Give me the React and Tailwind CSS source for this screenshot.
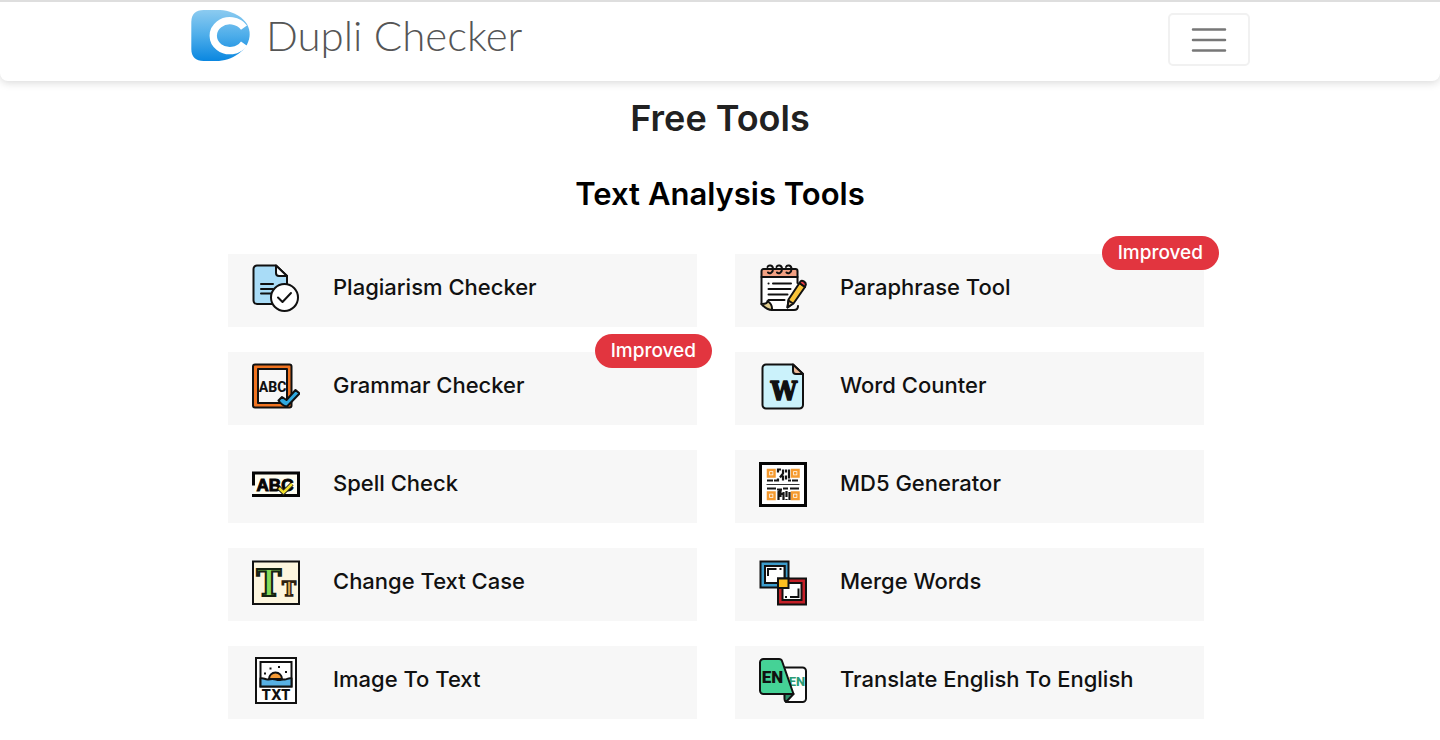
const PlagiarismIcon = () => (
  <svg viewBox="0 0 48 48" className="size-12 shrink-0" fill="none" stroke="#111" strokeWidth="2" strokeLinecap="round" strokeLinejoin="round" aria-hidden="true">
    <path d="M5 1.5h19l11 10.5v28H5a3.500 3.500 0 0 1-3.500-3.500V5A3.500 3.500 0 0 1 5 1.500z" fill="#a9dcf7" />
    <path d="M24 1.500V9a3 3 0 0 0 3 3h8z" fill="#fff" />
    <path d="M9 20h12M9 25h12M9 29.500h10" />
    <circle cx="32.500" cy="33.500" r="13.500" fill="#fff" />
    <path d="M26 33.500l4.500 4.500 8.500-9" />
  </svg>
);

const ParaphraseIcon = () => (
  <svg viewBox="0 0 48 48" className="size-12 shrink-0" fill="none" stroke="#111" strokeWidth="2" strokeLinecap="round" strokeLinejoin="round" aria-hidden="true">
    <path d="M2.500 5H38.500V38L30 46H13L2.500 40z" fill="#fff" stroke="none" />
    <path d="M2.500 13V7a2 2 0 0 1 2-2h32a2 2 0 0 1 2 2v6z" fill="#f3a183" />
    <path d="M2.500 13v27M38.500 13v6" />
    <path d="M2.500 40c4 0 6-1 6-3 3 2 5 5 4.500 9-4 0-8-3-10.500-6z" fill="#e3cf91" />
    <path d="M13 46h22c2.500 0 4-1.500 4-4" />
    <path d="M8.500 3c1-2.500 5.500-2 5.500 2s-3.500 5-5 3.500M17.500 3c1-2.500 5.500-2 5.500 2s-3.500 5-5 3.500M27 3c1-2.500 5.500-2 5.500 2s-3.500 5-5 3.500" />
    <path d="M9.500 19.500h.1M14 19.500h18M9.500 25h22M9.500 30.500h19M9.500 36h16" />
    <path d="M28.500 43.500l1-8 11-16.500 5.500 4-11.500 16.500z" fill="#f9c338" />
    <path d="M40.500 19l1-1.500c1.500-2 6.500 1 5 4L46 23z" fill="#ef3c45" />
    <path d="M28.500 43.500l1-7 4.500 3z" fill="#e8c58f" />
  </svg>
);

const GrammarIcon = () => (
  <svg viewBox="0 0 48 48" className="size-12 shrink-0" stroke="#111" strokeWidth="2" strokeLinejoin="round" aria-hidden="true">
    <rect x="1" y="2.500" width="38.500" height="43" rx="2" fill="#f07320" />
    <rect x="6" y="7" width="29" height="34" fill="#f7f7f7" />
    <text x="20.500" y="29.500" textAnchor="middle" fill="#111" stroke="none" fontSize="14" fontWeight="800" fontFamily="Roboto, sans-serif">ABC</text>
    <path d="M26.500 38.500l3.500-3.500 4.500 3L43.500 28l4 3.500L35 44.500c-3-.5-6-2-8.500-6z" fill="#2fa9e0" />
  </svg>
);

const WordIcon = () => (
  <svg viewBox="0 0 48 48" className="size-12 shrink-0" stroke="#111" strokeWidth="2" strokeLinejoin="round" aria-hidden="true">
    <path d="M7 2.500h27L44 12v31a3.500 3.500 0 0 1-3.500 3.500H7A3.500 3.500 0 0 1 3.500 43V6A3.500 3.500 0 0 1 7 2.500z" fill="#cbf2fb" />
    <path d="M34 2.500V9a3 3 0 0 0 3 3h7z" fill="#eab795" />
    <text x="25" y="38" textAnchor="middle" fill="#111" stroke="#111" strokeWidth="1.500" fontSize="26" fontWeight="700" fontFamily="'DejaVu Serif Condensed', 'DejaVu Serif', serif">W</text>
  </svg>
);

const SpellIcon = () => (
  <svg viewBox="0 0 48 48" className="size-12 shrink-0" aria-hidden="true">
    <rect x="2" y="13" width="44" height="23" fill="#fffdf0" />
    <path d="M1.500 25.500V13h45v22.500H0" fill="none" stroke="#050505" strokeWidth="3" />
    <text x="23" y="31" textAnchor="middle" fill="#050505" stroke="#050505" strokeWidth="1" fontSize="17" fontWeight="900" fontFamily="'Liberation Sans', Arial, sans-serif">ABC</text>
    <path d="M27 28l4.500 4.500 8.500-8.500" fill="none" stroke="#222" strokeWidth="4.500" />
    <path d="M27 28l4.500 4.500 8.500-8.500" fill="none" stroke="#f1df2d" strokeWidth="2.500" />
  </svg>
);

const Md5Icon = () => (
  <svg viewBox="0 0 48 48" className="size-12 shrink-0" aria-hidden="true">
    <rect x="1.500" y="3.500" width="45" height="42" fill="#fff" stroke="#050505" strokeWidth="3" />
    <g fill="#fff" stroke="#f59a2f" strokeWidth="2.500">
      <rect x="9" y="10" width="6.500" height="6.500" />
      <rect x="33" y="10" width="6.500" height="6.500" />
      <rect x="9" y="32.500" width="6.500" height="6.500" />
      <rect x="33" y="32.500" width="6.500" height="6.500" />
    </g>
    <g fill="#f59a2f">
      <rect x="11" y="12" width="2.500" height="2.500" />
      <rect x="35" y="12" width="2.500" height="2.500" />
      <rect x="11" y="34.500" width="2.500" height="2.500" />
      <rect x="35" y="34.500" width="2.500" height="2.500" />
    </g>
    <path d="M8 20.500h6m1 0h3m1-2v3m3-12h-3v3m5-3v4l-3 4m6-8v3m3-3v9m-3-3v4m-3-4v5m5 0h3m1 0h6M8 28.500h9m1 1h5m1 -1h5m2 0h9M19.500 40v-8l2-1v6m3-5v8m3-9v6m0 2v1m3-8v8M19 34h5" fill="none" stroke="#151515" strokeWidth="2.200" />
    <path d="M7.500 24.500h33" stroke="#333" strokeWidth="1" />
  </svg>
);

const TextCaseIcon = () => (
  <svg viewBox="0 0 48 48" className="size-12 shrink-0" fontFamily="'DejaVu Serif Condensed', 'DejaVu Serif', serif" aria-hidden="true">
    <rect x="1" y="3.500" width="46" height="42.500" fill="#fdf6df" stroke="#111" strokeWidth="2" />
    <text x="17" y="38" textAnchor="middle" fontSize="37" fontWeight="700" fill="#83dc58" stroke="#15220f" strokeWidth="2">T</text>
    <text x="37" y="38" textAnchor="middle" fontSize="21" fontWeight="700" fill="#e2a850" stroke="#2c2010" strokeWidth="1.400">T</text>
  </svg>
);

const MergeIcon = () => (
  <svg viewBox="0 0 48 48" className="size-12 shrink-0" stroke="#111" strokeWidth="2" aria-hidden="true">
    <path d="M1.500 3.500h28v26h-28zM6 8v17h19.500V8z" fill="#3d9dcc" fillRule="evenodd" />
    <path d="M6 8h19.500v17H6z" fill="#fff" />
    <path d="M19 20.500h28v26H19z" fill="#c41f27" />
    <path d="M23.500 25h19v17h-19z" fill="#fff" />
    <path d="M19 20.500h10.500V30H19z" fill="#fbbd1f" />
    <path d="M9 18v-7h8.500M20.500 11h2M39.500 30.500v8.500h-8.500M28 39h-2" fill="none" />
  </svg>
);

const ImageTextIcon = () => (
  <svg viewBox="0 0 48 48" className="size-12 shrink-0" stroke="#111" strokeWidth="2" aria-hidden="true">
    <rect x="4" y="2" width="40" height="45" fill="#fff" />
    <rect x="8.500" y="6" width="31" height="24.500" fill="#fff" />
    <path d="M17 23a6.500 6.500 0 0 1 13 0z" fill="#f59a35" />
    <path d="M8.500 22.500c3-1 4 1 7 1s4-1.500 8.500 0 5-.5 8 0 4-2 7.500-1v8h-31z" fill="#58b0e3" />
    <path d="M12 17.500h2M17.500 12.500h2M26 11h2M33 16h2" />
    <text x="24" y="44" textAnchor="middle" fill="#111" stroke="none" fontSize="14" fontWeight="800" fontFamily="Inter, sans-serif">TXT</text>
  </svg>
);

const TranslateIcon = () => (
  <svg viewBox="0 0 48 48" className="size-12 shrink-0" stroke="#111" strokeWidth="2" strokeLinejoin="round" fontFamily="Roboto, sans-serif" aria-hidden="true">
    <path d="M25 11.500h18.500A3.500 3.500 0 0 1 47 15v27.500a3.500 3.500 0 0 1-3.500 3.500H29c-2 0-3-1-3-3z" fill="#fff" />
    <text x="38" y="29.500" textAnchor="middle" fill="#2c9c77" stroke="none" fontSize="13" fontWeight="800">EN</text>
    <path d="M25.500 38h9l-7.500 8c-1-.5-1.500-1.500-1.500-3z" fill="#2b8f69" />
    <path d="M4.500 3H20c1.500 0 2.500.500 3 2l11.500 33H4.500A3.500 3.500 0 0 1 1 34.500v-28A3.500 3.500 0 0 1 4.500 3z" fill="#45d296" />
    <text x="13.500" y="27" textAnchor="middle" fill="#111" stroke="none" fontSize="17" fontWeight="900">EN</text>
  </svg>
);

const LogoMark = () => (
  <svg viewBox="32 30 178 153" className="h-[51px] w-[60px]" aria-hidden="true">
    <defs>
      <linearGradient id="logo" x1="0" y1="0" x2="0" y2="1">
        <stop offset="0" stopColor="#8ccbf0" />
        <stop offset="0.5" stopColor="#4dadea" />
        <stop offset="1" stopColor="#0a87e0" />
      </linearGradient>
    </defs>
    <path d="M72 30h50c48 4 88 32 88 72 0 44-44 76-92 81H72c-24 0-37-12-37-36V66c0-24 13-36 37-36z" fill="url(#logo)" />
    <path d="M193 83A50 45 0 1 0 193 131" fill="none" stroke="#fff" strokeWidth="22" />
  </svg>
);

const tools = [
  { name: "Plagiarism Checker", icon: PlagiarismIcon },
  { name: "Paraphrase Tool", icon: ParaphraseIcon, improved: true },
  { name: "Grammar Checker", icon: GrammarIcon, improved: true },
  { name: "Word Counter", icon: WordIcon },
  { name: "Spell Check", icon: SpellIcon },
  { name: "MD5 Generator", icon: Md5Icon },
  { name: "Change Text Case", icon: TextCaseIcon },
  { name: "Merge Words", icon: MergeIcon },
  { name: "Image To Text", icon: ImageTextIcon },
  { name: "Translate English To English", icon: TranslateIcon },
];

const Navbar = () => {
  return (
    <header className="rounded-b-lg border-t-2 border-[#dedede] bg-white pt-2 pb-3 shadow-[0_2px_8px_rgba(0,0,0,0.15)]">
      <div className="mx-auto flex max-w-[1060px] items-center justify-between">
        <a href="#" className="flex items-center gap-4 pb-2">
          <LogoMark />
          <span className="font-[Lato,sans-serif] text-[42px] leading-[51px] font-light text-[#555]">Dupli Checker</span>
        </a>
        <button type="button" aria-label="Toggle navigation" className="flex h-[53px] w-[82px] items-center justify-center rounded-[5px] border-2 border-[#f1f1f1]">
          <svg viewBox="0 0 36 26" className="h-[26px] w-9" stroke="#777" strokeWidth="2.500" strokeLinecap="round" aria-hidden="true">
            <path d="M2 2.500h32M2 13h32M2 23.500h32" />
          </svg>
        </button>
      </div>
    </header>
  );
};

const ToolCard = ({ name, icon: Icon, improved }) => {
  return (
    <li className="relative">
      <a href="#" className="flex items-center gap-[33px] bg-[#f7f7f7] px-6 pt-2.5 pb-[15px]">
        <Icon />
        <span className="pb-0.5 text-[22px] leading-8 font-medium text-[#111]">{name}</span>
      </a>
      {improved && (
        <span className="absolute -top-[18px] -right-[15px] rounded-full bg-[#e2353f] px-4 text-[19px] leading-[34px] font-medium text-white">
          Improved
        </span>
      )}
    </li>
  );
};

const App = () => {
  return (
    <div className="bg-white font-[Inter,sans-serif]">
      <Navbar />
      <main className="mx-auto max-w-[1060px] pb-5">
        <h1 className="pt-[17px] text-center text-4xl leading-10 font-semibold text-[#212121]">Free Tools</h1>
        <h2 className="mt-9 text-center text-[31px] leading-10 font-semibold text-black">Text Analysis Tools</h2>
        <ul className="mt-10 grid grid-cols-2 gap-x-[38px] gap-y-[25px] pr-[46px] pl-[38px]">
          {tools.map((tool) => (
            <ToolCard key={tool.name} {...tool} />
          ))}
        </ul>
      </main>
    </div>
  );
};

export default App;
